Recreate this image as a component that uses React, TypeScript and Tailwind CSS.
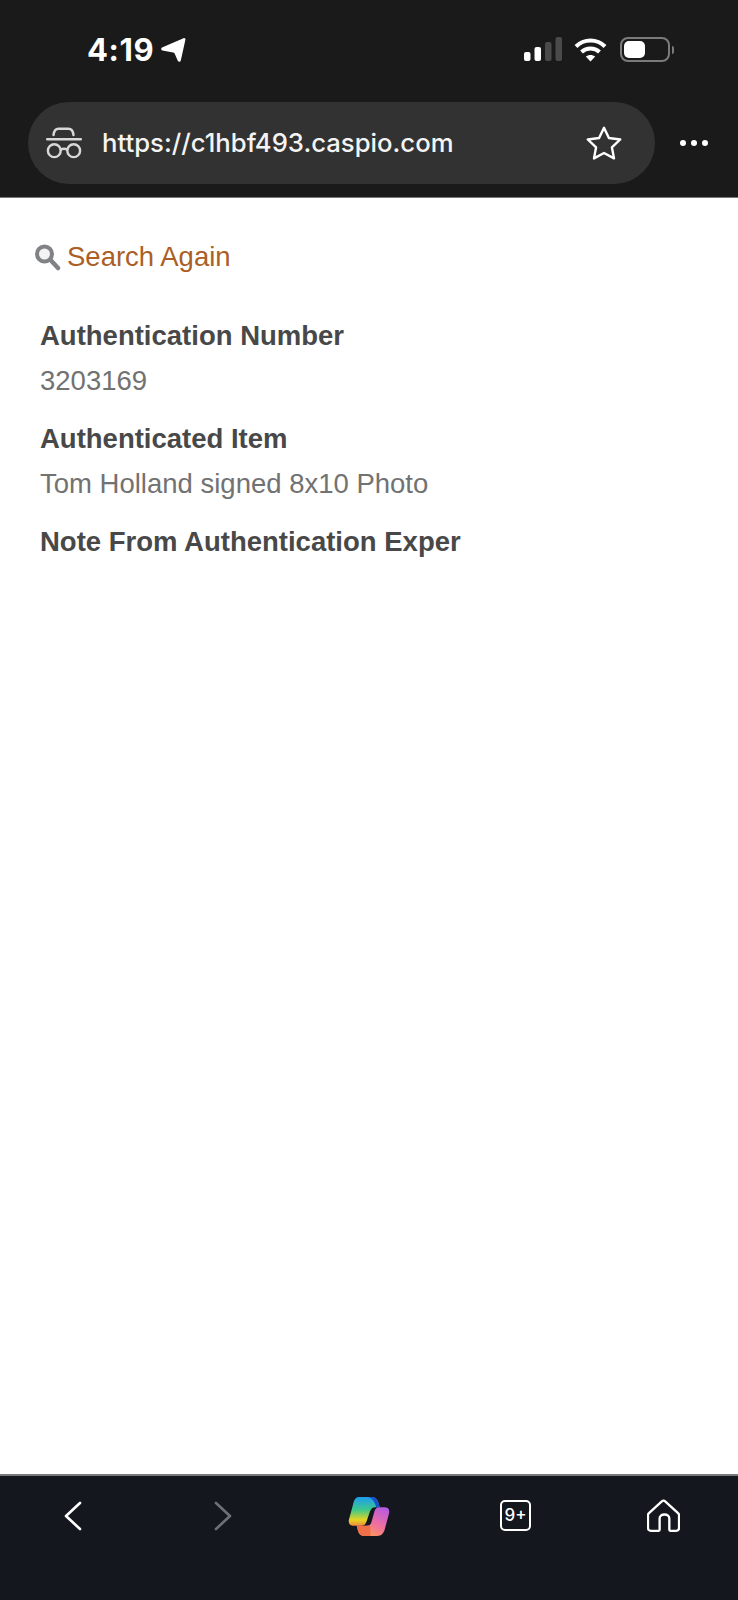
import React from "react";

const Field = ({ label, value }: { label: string; value?: string }) => (
  <div className="mb-[18px]">
    <div className="text-[27.5px] leading-[40px] font-bold text-[#484848]">{label}</div>
    {value && <div className="mt-[5px] text-[27.5px] leading-[40px] text-[#727272]">{value}</div>}
  </div>
);

const StatusBar = () => (
  <div className="flex h-[102px] items-start justify-between pl-[87px] pr-[64px] pt-[32px]">
    <div className="flex items-center gap-[6px] text-white">
      <span className="font-['Inter'] text-[31px] leading-[36px] font-bold tracking-[0.6px]">4:19</span>
      <svg width="27" height="26" viewBox="0 0 27 26" fill="#fff">
        <path d="M2 10.500 23.500 1.200c1.200-.5 2.200.4 1.900 1.600L20.800 23.500c-.4 1.600-2.400 1.700-3 .2l-3.200-7.100c-.3-.7-.8-1-1.500-1.100L2.400 13.400c-1.400-.3-1.600-2.300-.4-2.900Z" />
      </svg>
    </div>
    <div className="flex items-center gap-[12px] pt-[5px]">
      <svg width="38" height="25" viewBox="0 0 38 25">
        <rect x="0" y="15" width="6.500" height="9" rx="2" fill="#fff" />
        <rect x="10.500" y="10" width="6.500" height="14" rx="2" fill="#fff" />
        <rect x="21" y="5" width="6.500" height="19" rx="2" fill="#4a4a4a" />
        <rect x="31.500" y="0" width="6.500" height="24" rx="2" fill="#4a4a4a" />
      </svg>
      <svg width="33" height="25" viewBox="0 0 33 25" fill="none" stroke="#fff" strokeWidth="4">
        <path d="M2 9.500c8-8 21-8 29 0" />
        <path d="M7.500 15c5-4.600 13-4.600 18 0" />
        <path d="M16.500 24.500 11.800 19.600c2.700-2.200 6.700-2.200 9.400 0Z" fill="#fff" stroke="none" />
      </svg>
      <div className="ml-[1px] flex items-center">
        <div className="flex h-[25px] w-[50px] items-center rounded-[8px] border-2 border-[#7b7b7b] p-[2px]">
          <div className="h-[17px] w-[21px] rounded-[5px] bg-white" />
        </div>
        <div className="ml-[2px] h-[8px] w-[2px] rounded-r-full bg-[#7b7b7b]" />
      </div>
    </div>
  </div>
);

const AddressBar = () => (
  <div className="flex h-[96px] items-start border-b border-[#77787a]">
    <div className="ml-[28px] flex h-[82px] w-[627px] items-center rounded-[41px] bg-[#323232] pl-[18px] pr-[33px]">
      <svg width="36" height="32" viewBox="0 0 36 32" fill="none" stroke="#d8d8d8" strokeWidth="2.400" strokeLinecap="round">
        <path d="M7.500 8C8 4 9.500 1.800 12.500 1.800h10C25.500 1.800 27 4 27.500 8" />
        <path d="M1.200 12.300h33.600" />
        <circle cx="8.300" cy="23.700" r="6.400" />
        <circle cx="27.700" cy="23.700" r="6.400" />
        <path d="M14.700 22.500c2.200-1 4.400-1 6.600 0" />
      </svg>
      <span className="ml-[20px] font-['Inter'] text-[25.700px] leading-[32px] font-medium text-[#f4f4f4]">
        https://c1hbf493.caspio.com
      </span>
      <svg className="ml-auto" width="36" height="34" viewBox="0 0 36 34" fill="none" stroke="#fff" strokeWidth="2.400" strokeLinejoin="round">
        <path d="M18 1.800 22.900 12l11.300 1.500-8.300 7.800 2.100 11.100L18 27l-10 5.400 2.100-11.100-8.300-7.800L13.100 12Z" />
      </svg>
    </div>
    <div className="ml-[25px] mt-[38px] flex gap-[5px]">
      <span className="h-[6px] w-[6px] rounded-full bg-white" />
      <span className="h-[6px] w-[6px] rounded-full bg-white" />
      <span className="h-[6px] w-[6px] rounded-full bg-white" />
    </div>
  </div>
);

const SearchAgain = () => (
  <div className="flex items-center pl-[34px]">
    <svg width="27" height="28" viewBox="0 0 27 28" fill="none">
      <circle cx="10.500" cy="11" r="7.500" stroke="#808285" strokeWidth="4" fill="#f3f3f3" />
      <path d="m17 17.500 7 7.500" stroke="#808285" strokeWidth="4.500" strokeLinecap="round" />
    </svg>
    <span className="ml-[6px] text-[27.500px] leading-[40px] text-[#ab5f26]">Search Again</span>
  </div>
);

const BottomNav = () => (
  <div className="h-[126px] border-t-2 border-[#77787a] bg-[#14171e]">
    <div className="flex items-start pt-[21px]">
      <svg className="ml-[63px] mt-[3px]" width="20" height="32" viewBox="0 0 20 32" fill="none" stroke="#fff" strokeWidth="2.600" strokeLinecap="round" strokeLinejoin="round">
        <path d="M17 3 3 16l14 13" />
      </svg>
      <svg className="ml-[130px] mt-[3px]" width="20" height="32" viewBox="0 0 20 32" fill="none" stroke="#6e7078" strokeWidth="2.600" strokeLinecap="round" strokeLinejoin="round">
        <path d="m3 3 14 13L3 29" />
      </svg>
      <svg className="ml-[115px]" width="42" height="39" viewBox="0 0 40 38">
        <defs>
          <linearGradient id="copilotLeft" x1="0" y1="0" x2="0" y2="1">
            <stop offset="0" stopColor="#1e9cf0" />
            <stop offset="0.450" stopColor="#3ec98a" />
            <stop offset="0.800" stopColor="#e8d422" />
            <stop offset="1" stopColor="#f08a3c" />
          </linearGradient>
          <linearGradient id="copilotRight" x1="0.800" y1="0" x2="0.300" y2="1">
            <stop offset="0" stopColor="#b45be0" />
            <stop offset="0.550" stopColor="#f06fa0" />
            <stop offset="1" stopColor="#fb9a55" />
          </linearGradient>
        </defs>
        {/* left ribbon runs blue to yellow, right ribbon purple to orange, with a dark slot between */}
        <path d="M10 0H22C26 0 28 2 29 5L30.500 10H26C23.500 10 22 11.500 21 14L17.500 24C16.500 27 14.500 28 12 28H5C1.500 28-.5 26 .5 22L4.500 7C5.500 3 7 0 10 0Z" fill="url(#copilotLeft)" />
        <path d="M19 0H22C26 0 28 2 29 5L30.500 10H27C25.500 4 23 1 19 0Z" fill="#1a50c8" />
        <path d="M30 10H35C38.500 10 40.500 12 39.500 16L35.500 31C34.500 35.500 32 38 28 38H16C12.500 38 10.500 36.500 9.500 33.500L8 28H18C21 28 22 26 22.500 24L25.500 13.500C26.300 11 28 10 30 10Z" fill="url(#copilotRight)" />
        <path d="M8 28H18C19 28 20 27.800 21 27.200L21.500 38H16C12.500 38 10.500 36.500 9.500 33.500Z" fill="#ee6f48" />
      </svg>
      <div className="ml-[110px] mt-[3px] flex h-[31px] w-[31px] items-center justify-center rounded-[5px] border-2 border-white font-['Inter'] text-[17px] leading-none font-medium text-white">
        9+
      </div>
      <svg className="ml-[116px] mt-[2px]" width="33" height="33" viewBox="0 0 34 34" fill="none" stroke="#fff" strokeWidth="2.400" strokeLinejoin="round">
        <path d="M2 14.500 15 2.600c1.200-1.100 2.800-1.100 4 0l13 11.900c.7.6 1 1.400 1 2.300v13c0 1.800-1.200 3-3 3h-6c-.6 0-1-.4-1-1V20c0-2.500-1.800-4-5-4s-5 1.500-5 4v11.800c0 .6-.4 1-1 1H4c-1.800 0-3-1.200-3-3v-13c0-.9.300-1.700 1-2.300Z" />
      </svg>
    </div>
  </div>
);

export default function App() {
  return (
    <div className="flex h-[1600px] w-[738px] flex-col bg-white font-['Liberation_Sans',sans-serif]">
      <div className="bg-[#1a1a1a]">
        <StatusBar />
        <AddressBar />
      </div>
      <main className="flex-1 pt-[39px]">
        <SearchAgain />
        <div className="mt-[39px] pl-[40px]">
          <Field label="Authentication Number" value="3203169" />
          <Field label="Authenticated Item" value="Tom Holland signed 8x10 Photo" />
          <Field label="Note From Authentication Exper" />
        </div>
      </main>
      <BottomNav />
    </div>
  );
}
